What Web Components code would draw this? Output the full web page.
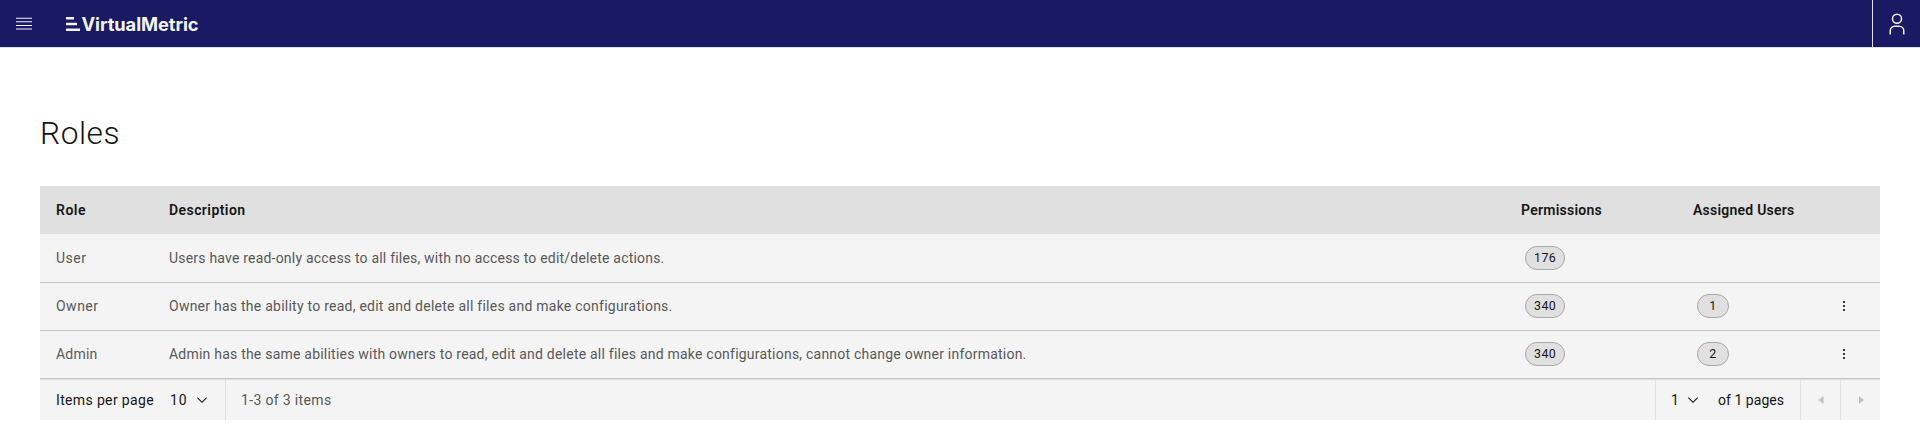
<!DOCTYPE html>
<html lang="en">
<head>
<meta charset="utf-8">
<title>Roles</title>
<style>
html,body{margin:0;background:#fff}
body{font-family:Roboto,"Liberation Sans",sans-serif;font-size:14px;color:#161616;overflow:hidden}
</style>
</head>
<body>
<vm-app></vm-app>
<script>
const define = (name, html, setup) => customElements.define(name, class extends HTMLElement {
  connectedCallback() {
    if (this.shadowRoot) return;
    const t = document.createElement('template');
    t.innerHTML = html;
    this.attachShadow({ mode: 'open' }).append(t.content.cloneNode(true));
    if (setup) setup(this, this.shadowRoot);
  }
});

/* Label whose tracking is adjusted to fill the measure given in "w". */
define('vm-label', `<style>:host{display:inline-block;white-space:nowrap;line-height:18px}</style><span><slot></slot></span>`, (el, root) => {
  const w = parseFloat(el.getAttribute('w'));
  const span = root.querySelector('span');
  const n = el.textContent.length;
  span.style.letterSpacing = '0';
  const natural = span.getBoundingClientRect().width;
  span.style.letterSpacing = ((w - natural) / n).toFixed(4) + 'px';
});

define('vm-count', `<style>
:host{display:flex;box-sizing:border-box;height:24px;min-width:32px;width:max-content;padding:0 8px;margin-left:4px;border:1px solid #a8a8a8;border-radius:12px;background:#e0e0e0;align-items:center;justify-content:center;font-size:12.4px;line-height:16px;letter-spacing:.45px}
span{margin-top:-1px}
</style><span><slot></slot></span>`);

define('vm-kebab', `<style>:host{display:block;width:16px;height:16px}svg{display:block}</style>
<svg width="16" height="16" fill="#393939"><path d="M7 3h2v2H7zM7 7h2v2H7zM7 11h2v2H7z"/></svg>`);

define('vm-chevron', `<style>:host{display:block;width:16px;height:16px}svg{display:block}</style>
<svg width="16" height="16" fill="#161616"><path d="M8 11 3 6l.7-.7L8 9.6l4.3-4.3.7.7z"/></svg>`);

define('vm-header', `<style>
:host{display:flex;box-sizing:border-box;height:48px;background:#191964;border-bottom:1px solid #e0e0e0;align-items:center}
.menu{width:48px;display:flex;padding-left:16px;box-sizing:border-box}
.brand{display:flex;align-items:center;margin-left:18px;color:#f4f4f4;font:700 18.3px/24px Inter,sans-serif}
.brand svg{margin-right:1.5px}
.user{margin-left:auto;width:47px;height:47px;border-left:1px solid #e0e0e0;display:flex;align-items:center;justify-content:center}
svg{display:block}
</style>
<div class="menu"><svg width="16" height="13" fill="#f4f4f4"><path d="M0 .7h16v1.1H0zM0 4.2h16v1.1H0zM0 7.9h16v1.1H0zM0 11.4h16v1.1H0z"/></svg></div>
<div class="brand"><svg width="14" height="14" fill="#f4f4f4"><path d="M0 0h8v2.4H0zM0 5.8h11v2.4H0zM0 11.5h14v2.4H0z"/></svg><vm-label w="117">VirtualMetric</vm-label></div>
<div class="user"><svg width="24" height="24" viewBox="0 0 32 32" fill="#f4f4f4"><path d="M16 4a5 5 0 1 1-5 5 5 5 0 0 1 5-5m0-2a7 7 0 1 0 7 7 7 7 0 0 0-7-7zM26 30h-2v-5a5 5 0 0 0-5-5h-6a5 5 0 0 0-5 5v5H6v-5a7 7 0 0 1 7-7h6a7 7 0 0 1 7 7z"/></svg></div>`);

define('vm-row', `<style>
:host{display:grid;box-sizing:border-box;height:48px;grid-template-columns:113px 1352px 172px 143px 1fr;padding-left:16px;background:#f4f4f4;border-bottom:1px solid #c6c6c6;color:#585858;align-items:start}
:host([first]){height:49px;padding-top:1px}
:host([head]){background:#e0e0e0;border:0;color:#161616;font-weight:600}
::slotted(*){margin-top:14px}
:host([head]) ::slotted(*){margin-top:15px}
::slotted(vm-count){margin-top:11px;color:#161616}
::slotted(vm-kebab){margin-top:15px}
</style><slot></slot>`);

define('vm-pagination', `<style>
:host{display:flex;box-sizing:border-box;height:41px;border-top:1px solid #e0e0e0;background:#f4f4f4}
div{display:flex;align-items:center;box-sizing:border-box;height:40px}
.size{width:185px;padding-left:16px}
.size vm-label+vm-label{margin-left:16px}
vm-chevron{margin-left:6px}
.range{border-left:1px solid #e0e0e0;padding-left:15px;color:#585858}
.page{margin-left:auto;border-left:1px solid #e0e0e0;width:145px;padding-left:15px}
.page vm-chevron{margin-left:5.5px}
.page vm-chevron+vm-label{margin-left:17px}
.nav{width:40px;border-left:1px solid #e0e0e0;justify-content:center}
.nav svg{display:block}
</style>
<div class="size"><vm-label w="98">Items per page</vm-label><vm-label w="17.5">10</vm-label><vm-chevron></vm-chevron></div>
<div class="range"><vm-label w="90.5">1-3 of 3 items</vm-label></div>
<div class="page"><vm-label w="8.5">1</vm-label><vm-chevron></vm-chevron><vm-label w="66">of 1 pages</vm-label></div>
<div class="nav"><svg width="16" height="16" fill="#c1c1c1"><path d="M10.5 4v8L5.5 8z"/></svg></div>
<div class="nav"><svg width="16" height="16" fill="#c1c1c1"><path d="M6 4v8l5-4z"/></svg></div>`);

define('vm-app', `<style>
:host{display:block}
main{padding:61px 40px 0}
h1{margin:0 0 28px;height:49px;font-weight:300;font-size:31.7px;display:flex;align-items:center}
h1 vm-label{line-height:40px}
</style>
<vm-header></vm-header>
<main>
<h1><vm-label w="80">Roles</vm-label></h1>
<vm-row head><vm-label w="30">Role</vm-label><vm-label w="76.5">Description</vm-label><vm-label w="81">Permissions</vm-label><vm-label w="101.5">Assigned Users</vm-label></vm-row>
<vm-row first><vm-label w="30.5">User</vm-label><vm-label w="495">Users have read-only access to all files, with no access to edit/delete actions.</vm-label><vm-count>176</vm-count></vm-row>
<vm-row><vm-label w="42.5">Owner</vm-label><vm-label w="502.5">Owner has the ability to read, edit and delete all files and make configurations.</vm-label><vm-count>340</vm-count><vm-count>1</vm-count><vm-kebab></vm-kebab></vm-row>
<vm-row><vm-label w="41.5">Admin</vm-label><vm-label w="856.5">Admin has the same abilities with owners to read, edit and delete all files and make configurations, cannot change owner information.</vm-label><vm-count>340</vm-count><vm-count>2</vm-count><vm-kebab></vm-kebab></vm-row>
<vm-pagination></vm-pagination>
</main>`);
</script>
</body>
</html>
